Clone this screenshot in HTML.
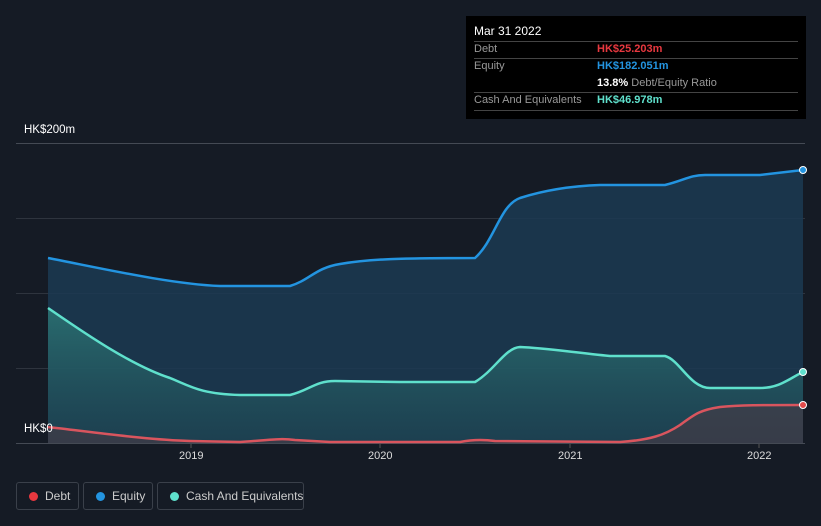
<!DOCTYPE html><html><head><style>
html,body{margin:0;width:821px;height:526px;overflow:hidden}
body{background:#151b25;font-family:"Liberation Sans",sans-serif;position:relative}
.t{position:absolute;color:#fff;font-size:11px;white-space:nowrap}
.lg{position:absolute;top:482px;height:28px;border:1px solid #3a404a;border-radius:3px;color:#ccc;font-size:12px;line-height:26px;box-sizing:border-box;white-space:nowrap}
.lg i{position:absolute;left:12px;top:9px;width:9px;height:9px;border-radius:50%}
</style></head><body>
<svg width="821" height="526" style="position:absolute;left:0;top:0">
<defs>
<linearGradient id="cg" x1="0" y1="0" x2="0" y2="1"><stop offset="0" stop-color="#2d7a78" stop-opacity=".8"/><stop offset="1" stop-color="#1f4a55" stop-opacity=".5"/></linearGradient>
</defs>
<g stroke="#2e343e" stroke-width="1">
<line x1="16" y1="143.5" x2="805" y2="143.5" stroke="#444a54"/>
<line x1="16" y1="218.5" x2="805" y2="218.5"/>
<line x1="16" y1="293.5" x2="805" y2="293.5"/>
<line x1="16" y1="368.5" x2="805" y2="368.5"/>
<line x1="16" y1="443.5" x2="805" y2="443.5" stroke="#444a54"/>
</g>
<path d="M48,258 C100,268 170,284 220,286 L290,286 C310,280 315,268 340,264 C370,259 400,258 475,258 C495,240 500,205 520,198 C545,190 570,186 600,185 L665,185 C685,180 690,175 705,175 L760,175 L803,170 L803,443 L48,443Z" fill="#1b3a52" fill-opacity=".85"/>
<path d="M48,308 C80,330 130,365 170,378 C190,386 200,394 240,395 L290,395 C310,390 315,381 335,381 L400,382 L475,382 C495,370 505,348 520,347 C545,348 570,352 610,356 L665,356 C680,360 690,388 710,388 L760,388 C780,388 790,378 803,372 L803,443 L48,443Z" fill="url(#cg)"/>
<path d="M48,427 C100,433 150,440 190,441 L240,442 C270,440 280,438 295,440 L330,442 L460,442 C470,440 480,439 495,441 L620,442 C650,440 665,435 680,425 C695,414 700,410 720,407 C740,405 760,405 803,405 L803,443 L48,443Z" fill="#4a3a44" fill-opacity=".6"/>
<path d="M48,258 C100,268 170,284 220,286 L290,286 C310,280 315,268 340,264 C370,259 400,258 475,258 C495,240 500,205 520,198 C545,190 570,186 600,185 L665,185 C685,180 690,175 705,175 L760,175 L803,170" fill="none" stroke="#2394e0" stroke-width="2.5"/>
<path d="M48,308 C80,330 130,365 170,378 C190,386 200,394 240,395 L290,395 C310,390 315,381 335,381 L400,382 L475,382 C495,370 505,348 520,347 C545,348 570,352 610,356 L665,356 C680,360 690,388 710,388 L760,388 C780,388 790,378 803,372" fill="none" stroke="#5fe0cc" stroke-width="2.5"/>
<path d="M48,427 C100,433 150,440 190,441 L240,442 C270,440 280,438 295,440 L330,442 L460,442 C470,440 480,439 495,441 L620,442 C650,440 665,435 680,425 C695,414 700,410 720,407 C740,405 760,405 803,405" fill="none" stroke="#d9555e" stroke-width="2.5"/>
<circle cx="803" cy="170" r="3.5" fill="#2394e0" stroke="#fff" stroke-width="1"/>
<circle cx="803" cy="372" r="3.5" fill="#5fe0cc" stroke="#fff" stroke-width="1"/>
<circle cx="803" cy="405" r="3.5" fill="#e24b4b" stroke="#fff" stroke-width="1"/>
<g stroke="#555" ><line x1="191" y1="444" x2="191" y2="448"/><line x1="380" y1="444" x2="380" y2="448"/><line x1="570" y1="444" x2="570" y2="448"/><line x1="759" y1="444" x2="759" y2="448"/></g>
</svg>
<div class="t" style="left:24px;top:124px;font-size:11.5px">HK$200m</div>
<div class="t" style="left:24px;top:423px;font-size:11.5px">HK$0</div>
<div class="t" style="left:179px;top:450px;color:#ddd">2019</div>
<div class="t" style="left:368px;top:450px;color:#ddd">2020</div>
<div class="t" style="left:558px;top:450px;color:#ddd">2021</div>
<div class="t" style="left:747px;top:450px;color:#ddd">2022</div>
<div style="position:absolute;left:466px;top:16px;width:340px;height:103px;background:#000;font-size:11px;color:#999;white-space:nowrap">
<div style="position:absolute;left:8px;top:8px;color:#fff;font-size:12px">Mar 31 2022</div>
<div style="position:absolute;left:8px;right:8px;top:25px;border-top:1px solid #444"></div>
<div style="position:absolute;left:8px;top:27px">Debt</div><div style="position:absolute;left:131px;top:27px;color:#e8383f;font-weight:bold">HK$25.203m</div>
<div style="position:absolute;left:8px;right:8px;top:42px;border-top:1px solid #444"></div>
<div style="position:absolute;left:8px;top:44px">Equity</div><div style="position:absolute;left:131px;top:44px;color:#2394e0;font-weight:bold">HK$182.051m</div>
<div style="position:absolute;left:131px;top:61px"><b style="color:#fff">13.8%</b> Debt/Equity Ratio</div>
<div style="position:absolute;left:8px;right:8px;top:76px;border-top:1px solid #444"></div>
<div style="position:absolute;left:8px;top:78px">Cash And Equivalents</div><div style="position:absolute;left:131px;top:78px;color:#5fe0cc;font-weight:bold">HK$46.978m</div>
<div style="position:absolute;left:8px;right:8px;top:94px;border-top:1px solid #444"></div>
</div>
<div class="lg" style="left:16px;width:63px"><i style="background:#e8383f"></i><span style="position:absolute;left:28px">Debt</span></div>
<div class="lg" style="left:83px;width:70px"><i style="background:#2394e0"></i><span style="position:absolute;left:28px">Equity</span></div>
<div class="lg" style="left:157px;width:147px"><i style="background:#5fe0cc"></i><span style="position:absolute;left:28px">Cash And Equivalents</span></div>
</body></html>
